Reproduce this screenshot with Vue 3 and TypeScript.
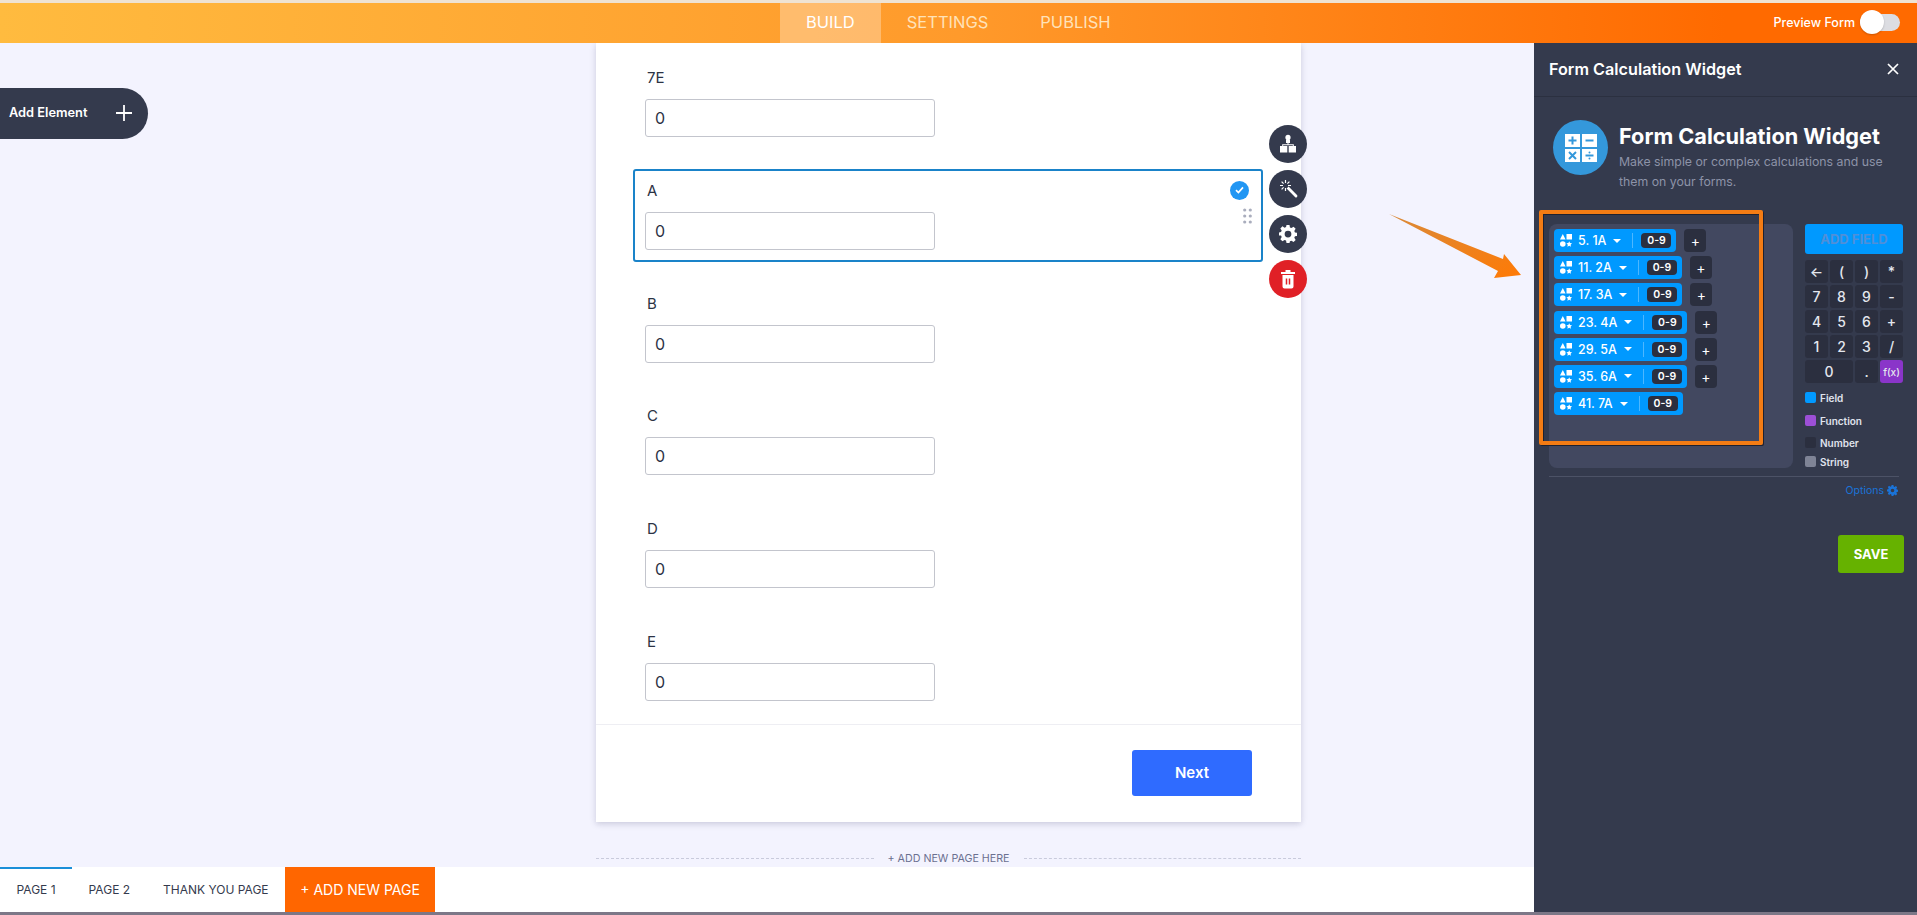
<script setup lang="ts">
const tabs = ['BUILD', 'SETTINGS', 'PUBLISH']
const fields = ['7E', 'A', 'B', 'C', 'D', 'E']
const chips = ['5. 1A', '11. 2A', '17. 3A', '23. 4A', '29. 5A', '35. 6A', '41. 7A']
const keys = ['←', '(', ')', '*', '7', '8', '9', '-', '4', '5', '6', '+', '1', '2', '3', '/']
const legend = [
  { name: 'Field', cls: 'sw-field' },
  { name: 'Function', cls: 'sw-func' },
  { name: 'Number', cls: 'sw-num' },
  { name: 'String', cls: 'sw-str' },
]
const pages = ['PAGE 1', 'PAGE 2', 'THANK YOU PAGE']
</script>

<template>
  <div class="app">
    <div class="strip-top"></div>
    <header class="topbar">
      <nav class="tabs">
        <div v-for="(t, i) in tabs" :key="t" class="tab" :class="{ active: i === 0 }">{{ t }}</div>
      </nav>
      <div class="preview">
        <span>Preview Form</span>
        <div class="toggle"><div class="knob"></div></div>
      </div>
    </header>

    <div class="main">
      <div class="left">
        <div class="canvas">
          <div class="add-el">
            <span>Add Element</span>
            <svg width="18" height="18" viewBox="0 0 18 18"><path d="M9 1v16M1 9h16" stroke="#fff" stroke-width="1.8" fill="none" /></svg>
          </div>

          <section class="card">
            <div class="fields">
              <div v-for="(f, i) in fields" :key="f" class="field" :class="{ selected: i === 1 }">
                <label class="flabel">{{ f }}</label>
                <input class="finput" value="0" readonly />
                <template v-if="i === 1">
                  <div class="check">
                    <svg width="9" height="8" viewBox="0 0 9 8"><path d="M1 4.2 3.4 6.5 8 1.4" stroke="#fff" stroke-width="1.7" fill="none" /></svg>
                  </div>
                  <svg class="drag" width="9" height="16" viewBox="0 0 9 16" fill="#a9adbd">
                    <circle cx="1.7" cy="2" r="1.6" /><circle cx="7.3" cy="2" r="1.6" />
                    <circle cx="1.7" cy="8" r="1.6" /><circle cx="7.3" cy="8" r="1.6" />
                    <circle cx="1.7" cy="14" r="1.6" /><circle cx="7.3" cy="14" r="1.6" />
                  </svg>
                  <div class="actions">
                    <div class="act">
                      <svg width="20" height="20" viewBox="0 0 20 20" fill="#fff">
                        <circle cx="10" cy="3.4" r="2.6" /><path d="M8 5.500h4V9H8z" />
                        <path d="M9.500 8h1v2.200h5.300V12h-1v-.8H5.200v.8h-1v-1.800h5.300z" />
                        <rect x="2" y="12" width="7.300" height="6.500" /><rect x="10.700" y="12" width="7.300" height="6.500" />
                      </svg>
                    </div>
                    <div class="act">
                      <svg width="22" height="22" viewBox="0 0 22 22" fill="#fff">
                        <path d="M9.600 10.600 11.600 8.600 20 17a1.400 1.400 0 0 1-2 2z" />
                        <path d="M8.500 2v3M8.500 10v3M3 7.500h3M11 7.500h3M4.600 3.600l2 2M4.600 11.400l2-2M12.400 3.600l-2 2" stroke="#fff" stroke-width="1.200" />
                      </svg>
                    </div>
                    <div class="act">
                      <svg width="18" height="18" viewBox="0 0 24 24" fill="#fff">
                        <path fill-rule="evenodd" d="M10 0h4l.6 3.200 2 .9 2.800-1.800 2.800 2.800-1.800 2.800.9 2 3.200.6v4l-3.200.6-.9 2 1.800 2.800-2.800 2.800-2.800-1.800-2 .9L14 24h-4l-.6-3.200-2-.9-2.800 1.800-2.800-2.800 1.800-2.800-.9-2L-.5 14v-4l3.200-.6.9-2L1.800 4.600l2.800-2.800 2.800 1.800 2-.9zM12 7.500a4.500 4.500 0 1 0 0 9 4.500 4.500 0 0 0 0-9z" />
                      </svg>
                    </div>
                    <div class="act act-del">
                      <svg width="16" height="20" viewBox="0 0 16 20">
                        <path fill="#fff" d="M1 3h14v2H1zM5.500 1h5v2h-5zM2.500 6h11v11.500a2 2 0 0 1-2 2h-7a2 2 0 0 1-2-2z" />
                        <path d="M6.500 9.500v6M9.500 9.500v6" stroke="#e02026" stroke-width="1.500" />
                      </svg>
                    </div>
                  </div>
                </template>
              </div>
            </div>
            <div class="card-foot">
              <button class="next">Next</button>
            </div>
          </section>

          <div class="new-page">
            <span class="dash"></span>
            <span class="np-text">+ ADD NEW PAGE HERE</span>
            <span class="dash"></span>
          </div>
        </div>

        <footer class="pagebar">
          <div v-for="(p, i) in pages" :key="p" class="ptab" :class="{ current: i === 0 }">{{ p }}</div>
          <div class="addpage">+ ADD NEW PAGE</div>
        </footer>
      </div>

      <aside class="panel">
        <div class="p-head">
          <span>Form Calculation Widget</span>
          <svg width="14" height="14" viewBox="0 0 14 14"><path d="M2 2l10 10M12 2 2 12" stroke="#fff" stroke-width="1.700" fill="none" /></svg>
        </div>
        <div class="intro">
          <div class="calc-ic">
            <svg width="32" height="28" viewBox="0 0 32 28">
              <rect x="0" y="0" width="15" height="13" fill="#fff" /><rect x="17" y="0" width="15" height="13" fill="#fff" />
              <rect x="0" y="15" width="15" height="13" fill="#fff" /><rect x="17" y="15" width="15" height="13" fill="#fff" />
              <path d="M7.500 2.500v8M3.500 6.500h8M20.500 6.500h8M4 18l7 7M11 18l-7 7M20.500 21.500h8" stroke="#3498db" stroke-width="2" fill="none" />
              <circle cx="24.500" cy="18.500" r="1" fill="#3498db" /><circle cx="24.500" cy="24.500" r="1" fill="#3498db" />
            </svg>
          </div>
          <div class="intro-text">
            <h1>Form Calculation Widget</h1>
            <p>Make simple or complex calculations and use them on your forms.</p>
          </div>
        </div>

        <div class="calc">
          <div class="expr">
            <div v-for="c in chips" :key="c" class="row">
              <div class="chip">
                <svg width="12" height="13" viewBox="0 0 12 13" fill="#fff">
                  <path d="M2.800 0 5.600 5.500H0z" /><rect x="6.500" y="0" width="5.500" height="5.500" />
                  <circle cx="2.800" cy="10" r="2.800" />
                  <path d="m9.200 7.200.85 1.900 1.950.25-1.400 1.400.35 2-1.750-1-1.750 1 .35-2-1.400-1.400 1.950-.25z" />
                </svg>
                <span class="c-name">{{ c }}</span>
                <svg class="caret" width="8" height="4" viewBox="0 0 8 4"><path d="M0 0h8L4 4z" fill="#fff" /></svg>
                <span class="c-sep"></span>
                <span class="c-badge">0-9</span>
              </div>
              <div v-if="c !== '41. 7A'" class="c-plus">+</div>
            </div>
          </div>

          <div class="side">
            <button class="addfield">ADD FIELD</button>
            <div class="keypad">
              <div v-for="k in keys" :key="k" class="key">{{ k }}</div>
              <div class="key zero">0</div>
              <div class="key">.</div>
              <div class="key fx">f(x)</div>
            </div>
            <div class="legend">
              <div v-for="l in legend" :key="l.name" class="lg">
                <span class="sw" :class="l.cls"></span>{{ l.name }}
              </div>
            </div>
          </div>
        </div>

        <div class="divider"></div>
        <div class="options">
          <span>Options</span>
          <svg width="11" height="11" viewBox="0 0 24 24" fill="#1a73d8">
            <path fill-rule="evenodd" d="M10 0h4l.6 3.200 2 .9 2.800-1.800 2.800 2.800-1.800 2.800.9 2 3.200.6v4l-3.200.6-.9 2 1.800 2.800-2.800 2.800-2.800-1.800-2 .9L14 24h-4l-.6-3.200-2-.9-2.800 1.800-2.800-2.800 1.800-2.800-.9-2L-.5 14v-4l3.200-.6.9-2L1.800 4.600l2.800-2.800 2.800 1.800 2-.9zM12 8a4 4 0 1 0 0 8 4 4 0 0 0 0-8z" />
          </svg>
        </div>
        <div class="save-row"><button class="save">SAVE</button></div>
      </aside>
    </div>
    <div class="strip-bottom"></div>

    <div class="outline"></div>
    <svg class="arrow" width="150" height="90" viewBox="0 0 150 90">
      <defs>
        <linearGradient id="ag" x1="0" y1="0" x2="1" y2="1">
          <stop offset="0" stop-color="#d98a3a" /><stop offset="1" stop-color="#ff7a05" />
        </linearGradient>
      </defs>
      <polygon points="9,14 123,59 124,54 141,75 114,78 118,71" fill="url(#ag)" />
    </svg>
  </div>
</template>

<style>
html, body { margin: 0; padding: 0; overflow: hidden; background: #f3f3fe; }
</style>

<style scoped>
* { box-sizing: border-box; }
.app {
  position: relative;
  width: 1917px;
  height: 915px;
  display: flex;
  flex-direction: column;
  overflow: hidden;
  font-family: Inter, "Noto Sans", sans-serif;
  color: #2c3345;
}
.strip-top { height: 3px; background: #efe3d2; }
.strip-bottom { height: 3px; background: #7c7787; }
.topbar {
  height: 40px;
  display: flex;
  align-items: stretch;
  padding-left: 780px;
  background: linear-gradient(90deg, #ffbb3f 0%, #ff9a2b 50%, #ff6a00 90%);
}
.tabs { display: flex; }
.tab {
  padding: 0 26px 3px;
  display: flex;
  align-items: center;
  font-size: 16.5px;
  color: #ffe2b8;
}
.tab.active { background: rgba(255, 255, 255, 0.3); color: #fff; }
.preview {
  margin-left: auto;
  padding: 0 17px 1px 0;
  display: flex;
  align-items: center;
  gap: 5px;
  color: #fff;
  font-size: 12.5px;
  font-weight: 500;
}
.toggle {
  position: relative;
  width: 40px;
  height: 17px;
  border-radius: 9px;
  background: #dcdde2;
}
.knob {
  position: absolute;
  left: 0;
  top: -4px;
  width: 24px;
  height: 24px;
  border-radius: 50%;
  background: #fff;
  box-shadow: 0 1px 2px rgba(0, 0, 0, 0.2);
}
.main { flex: 1; display: flex; min-height: 0; }
.left { flex: 1; display: flex; flex-direction: column; min-width: 0; }
.canvas {
  position: relative;
  flex: 1;
  background: #f3f3fe;
  overflow: hidden;
  padding-left: 596px;
}
.add-el {
  position: absolute;
  left: 0;
  top: 45px;
  width: 148px;
  height: 51px;
  padding: 0 15px 2px 9px;
  display: flex;
  align-items: center;
  justify-content: space-between;
  background: #343a4d;
  color: #fff;
  font-size: 12.8px;
  font-weight: 600;
  border-radius: 0 26px 26px 0;
}
.card {
  width: 705px;
  height: 779px;
  background: #fff;
  box-shadow: 0 2px 6px rgba(60, 60, 100, 0.22);
}
.fields {
  padding: 13px 0 11px 37px;
  display: flex;
  flex-direction: column;
  gap: 19.75px;
  border-bottom: 1px solid #eeeef3;
}
.field {
  position: relative;
  width: 630px;
  height: 93px;
  padding: 0 0 0 10px;
  border: 2px solid transparent;
  border-radius: 3px;
}
.field.selected { border-color: #1a83c9; }
.flabel {
  display: block;
  height: 41px;
  padding: 10px 0 0 2px;
  font-size: 15px;
  line-height: 20px;
}
.finput {
  display: block;
  width: 290px;
  height: 38px;
  padding: 0 9px;
  border: 1px solid #c3c5cd;
  border-radius: 3px;
  background: #fff;
  font-family: Inter, sans-serif;
  font-size: 16px;
  color: #2c3345;
  outline: none;
}
.check {
  position: absolute;
  left: 595px;
  top: 10px;
  width: 19px;
  height: 19px;
  border-radius: 50%;
  background: #2196f3;
  display: flex;
  align-items: center;
  justify-content: center;
}
.drag { position: absolute; left: 608px; top: 37px; }
.actions {
  position: absolute;
  left: 634px;
  top: -46px;
  display: flex;
  flex-direction: column;
  gap: 7px;
}
.act {
  width: 38px;
  height: 38px;
  border-radius: 50%;
  background: #343a4d;
  display: flex;
  align-items: center;
  justify-content: center;
}
.act-del { background: #e02026; }
.card-foot {
  height: 98px;
  padding: 25px 49px 0 0;
  display: flex;
  justify-content: flex-end;
  align-items: flex-start;
}
.next {
  width: 120px;
  height: 46px;
  border: none;
  border-radius: 3px;
  background: #2f6bff;
  color: #fff;
  font-family: Inter, sans-serif;
  font-size: 15px;
  font-weight: 600;
}
.new-page {
  width: 705px;
  margin-top: 30px;
  display: flex;
  align-items: center;
  gap: 14px;
}
.dash { flex: 1; border-top: 1px dashed #c9cbdc; }
.np-text { font-size: 10.7px; color: #6b7090; white-space: nowrap; }
.pagebar {
  height: 45px;
  display: flex;
  background: #fff;
  box-shadow: 0 -1px 0 #e9e9f1;
}
.ptab {
  padding: 0 16.500px;
  display: flex;
  align-items: center;
  font-size: 12px;
  color: #343a4d;
  white-space: nowrap;
}
.ptab.current { border-top: 2px solid #1a8fd8; padding-bottom: 2px; }
.addpage {
  width: 150px;
  display: flex;
  align-items: center;
  justify-content: center;
  background: #ff6600;
  color: #fff;
  font-size: 14px;
  white-space: nowrap;
}
.panel {
  width: 383px;
  background: #343a4d;
  color: #fff;
  display: flex;
  flex-direction: column;
}
.p-head {
  height: 54px;
  padding: 0 17px 2px 15px;
  display: flex;
  align-items: center;
  justify-content: space-between;
  border-bottom: 1px solid #2b3040;
  font-size: 16.2px;
  font-weight: 600;
}
.intro {
  margin-top: 23px;
  padding-left: 19px;
  display: flex;
  gap: 11px;
}
.calc-ic {
  width: 55px;
  height: 55px;
  flex: none;
  border-radius: 50%;
  background: #3498db;
  display: flex;
  align-items: center;
  justify-content: center;
}
.intro-text { padding-top: 2px; width: 280px; }
h1 { margin: 0; font-size: 21.7px; line-height: 28px; font-weight: 700; }
p { margin: 2px 0 0; font-size: 12.3px; line-height: 20px; color: #8d93a8; }
.calc {
  margin-top: 32px;
  padding-left: 15px;
  display: flex;
  gap: 12px;
}
.expr {
  width: 244px;
  height: 244px;
  padding: 5px;
  background: #424860;
  border-radius: 8px;
  display: flex;
  flex-direction: column;
  gap: 4.2px;
}
.row { display: flex; gap: 8px; }
.chip {
  height: 23px;
  padding: 0 5px 0 6px;
  display: flex;
  align-items: center;
  background: #0099ff;
  border-radius: 4px;
}
.c-name { margin-left: 6px; font-size: 12.500px; font-weight: 500; white-space: nowrap; }
.caret { margin-left: 7px; }
.c-sep { width: 1px; height: 15px; margin: 0 8px 0 11px; background: rgba(255, 255, 255, 0.3); }
.c-badge {
  width: 30px;
  height: 15px;
  border-radius: 4px;
  background: #2b2f3f;
  font-size: 10.5px;
  font-weight: 600;
  line-height: 15px;
  text-align: center;
}
.c-plus {
  width: 22px;
  height: 23px;
  border-radius: 4px;
  background: #2b2f3f;
  font-size: 14px;
  line-height: 23px;
  text-align: center;
}
.side { width: 98px; }
.addfield {
  display: block;
  width: 98px;
  height: 30px;
  border: none;
  border-radius: 3px;
  background: #0099ff;
  color: #4f8fd8;
  font-family: Inter, sans-serif;
  font-size: 13px;
  font-weight: 700;
  padding: 0;
}
.keypad {
  margin-top: 6px;
  display: grid;
  grid-template-columns: repeat(4, 23px);
  grid-auto-rows: 23px;
  gap: 2px;
}
.key {
  display: flex;
  align-items: center;
  justify-content: center;
  background: #2b2f3f;
  border-radius: 3px;
  color: #e4e7ee;
  font-size: 14px;
  font-weight: 500;
}
.zero { grid-column: span 2; }
.fx { background: #8a35c9; font-size: 10px; }
.legend { display: flex; flex-direction: column; }
.lg {
  display: flex;
  align-items: center;
  height: 11px;
  margin-top: 12px;
  font-size: 10px;
  font-weight: 600;
  color: #e0e4ee;
}
.lg:nth-child(1) { margin-top: 9px; }
.lg:nth-child(3) { margin-top: 11px; }
.lg:nth-child(4) { margin-top: 8px; }
.sw { width: 11px; height: 11px; margin-right: 4px; border-radius: 2px; }
.sw-field { background: #0099ff; }
.sw-func { background: #9c4fd6; }
.sw-num { background: #2b2f3f; }
.sw-str { background: #7f8496; }
.divider { height: 1px; margin: 8px 18px 0 15px; background: #4c5266; }
.options {
  margin-top: 6px;
  padding-right: 19px;
  height: 14px;
  display: flex;
  align-items: center;
  justify-content: flex-end;
  gap: 3px;
  font-size: 10.500px;
  color: #1a73d8;
}
.save-row { margin-top: 38px; padding-right: 13px; display: flex; justify-content: flex-end; }
.save {
  width: 66px;
  height: 38px;
  border: none;
  border-radius: 3px;
  background: #66b200;
  color: #fff;
  font-family: Inter, sans-serif;
  font-size: 13px;
  font-weight: 700;
}
.outline {
  position: absolute;
  left: 1539px;
  top: 210px;
  width: 224px;
  height: 235px;
  border: 4px solid #f47c14;
  border-radius: 2px;
  box-shadow: 1px 1px 0 #1f2230, inset 1px 1px 0 #1f2230;
  pointer-events: none;
}
.arrow { position: absolute; left: 1380px; top: 200px; }
</style>
